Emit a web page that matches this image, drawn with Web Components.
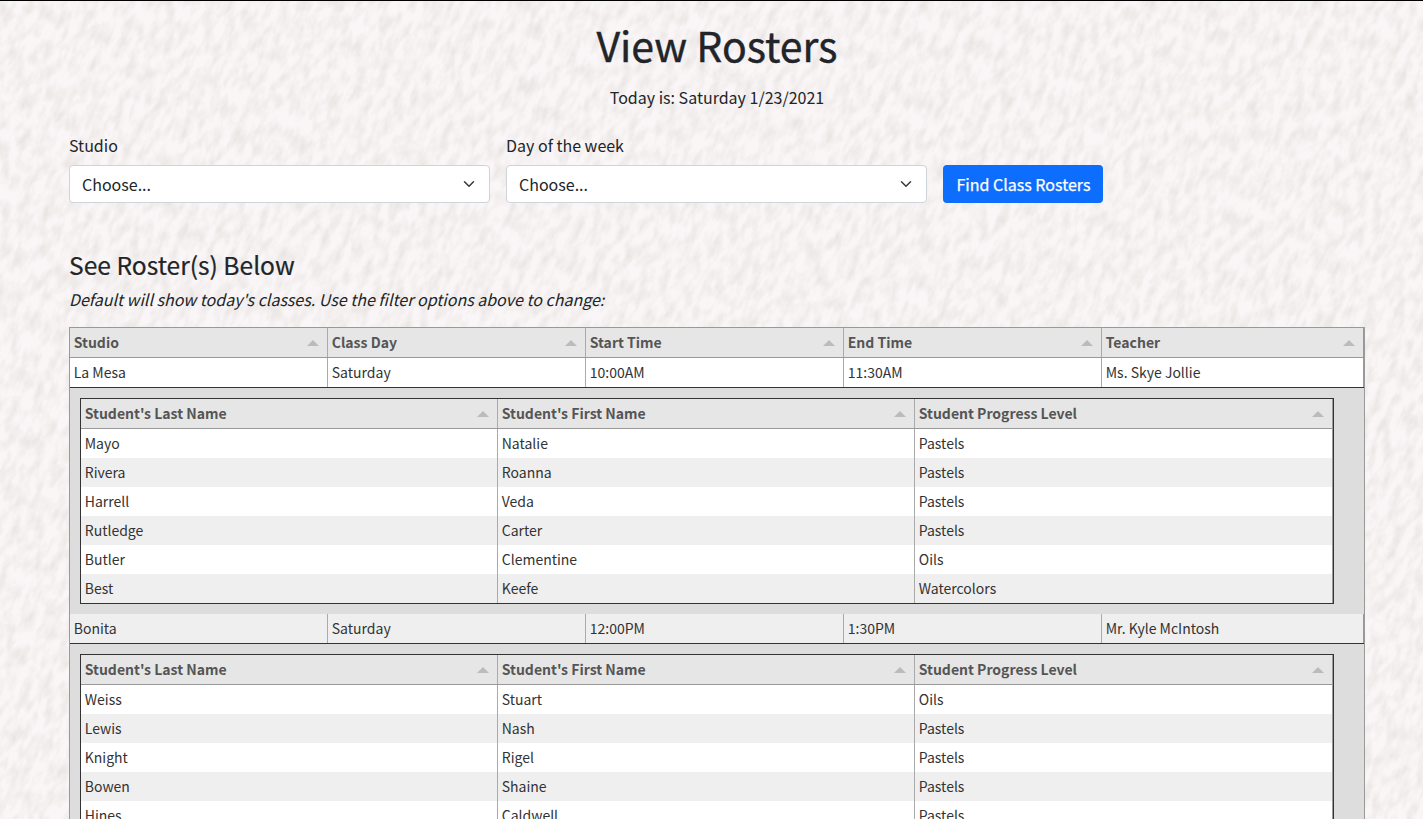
<!DOCTYPE html>
<html lang="en">
<head>
<meta charset="utf-8">
<title>View Rosters</title>
<style>
html,body{margin:0;height:100%;overflow:hidden}
body{font:400 16px/24px "Noto Sans CJK JP","Noto Sans",sans-serif;color:#212529;background:#f8f5f5}
</style>
</head>
<body>
<roster-page></roster-page>
<script>
const define = (name, html, setup) => customElements.define(name, class extends HTMLElement {
  connectedCallback() {
    if (this.shadowRoot) return;
    const root = this.attachShadow({ mode: 'open' });
    root.innerHTML = html;
    if (setup) setup(this, root);
  }
});

define('paper-texture', `
<style>:host{position:absolute;inset:0;overflow:hidden;z-index:-1;background:#faf6f7}svg{display:block}</style>
<svg width="1423" height="819" aria-hidden="true">
  <filter id="grain" filterUnits="userSpaceOnUse" x="-400" y="-700" width="2300" height="2300" color-interpolation-filters="sRGB">
    <feTurbulence type="fractalNoise" baseFrequency="0.12 0.055" numOctaves="5" seed="8" result="n"/>
    <feColorMatrix in="n" values="0 0 0 0 .74  0 0 0 0 .73  0 0 0 0 .69  .55 0 0 0 -.2"/>
  </filter>
  <g transform="rotate(24)"><rect x="-400" y="-700" width="2300" height="2300" filter="url(#grain)"/></g>
</svg>`);

define('select-field', `
<style>
:host{display:block;width:421px}
label{display:block;height:24px;margin-bottom:8px}
.box{box-sizing:border-box;height:38px;border:1px solid #ced4da;border-radius:4px;background:#fff;padding:0 12px;display:flex;align-items:center;justify-content:space-between}
svg{width:16px;height:12px}
</style>
<label><slot></slot></label>
<div class="box"><span>Choose...</span><svg viewBox="0 0 16 16"><path fill="none" stroke="#343a40" stroke-linecap="round" stroke-linejoin="round" stroke-width="2" d="M2 5l6 6 6-6"/></svg></div>`);

define('primary-button', `
<style>:host{display:block}
button{box-sizing:border-box;width:160px;height:38px;border:0;border-radius:4px;background:#0d6efd;color:#fff;font:inherit;-webkit-text-stroke:.25px #fff;padding:0 0 0 1px;white-space:nowrap}</style>
<button><slot></slot></button>`);

define('table-cell', `
<style>
:host{box-sizing:border-box;display:flex;justify-content:space-between;align-items:center;padding:0 8px 0 3.75px;height:29px;border-right:1px solid #aaa;font-size:14px;line-height:29px;color:#333;white-space:nowrap}
:host([head]){font-weight:700;color:#555}
:host(:last-of-type){border-color:#999}
i{display:none;border:6px solid transparent;border-top:0;border-bottom-color:#bbb}
:host([head]) i{display:block}
</style>
<span><slot></slot></span><i></i>`);

const cells = (list, head) => list.map(t => `<table-cell${head ? ' head' : ''}>${t}</table-cell>`).join('');

define('student-table', `
<style>
:host{box-sizing:border-box;display:block;width:1254px;border:1px solid #333;background:#fff}
.row{display:grid;grid-template-columns:417px 417px 418px}
.row:nth-child(odd){background:#efefef}
.row.head{background:#e6e6e6;border-bottom:1px solid #999}
</style>`, (el, root) => {
  const rows = el.getAttribute('rows').split(';').map(r => r.split(','));
  root.innerHTML += '<div><div class="row head">' + cells(["Student's Last Name", "Student's First Name", 'Student Progress Level'], true) + '</div>' +
    rows.map(r => `<div class="row">${cells(r)}</div>`).join('') + '</div>';
});

define('class-entry', `
<style>
:host{display:block;background:#ddd}
.row{display:grid;grid-template-columns:repeat(4,258px) 262px;background:#fff;border-bottom:1px solid #333}
:host([alt]) .row{background:#efefef}
.students{padding:10px}
</style>
<div class="row"></div><div class="students"><slot></slot></div>`, (el, root) => {
  root.querySelector('.row').innerHTML = cells(el.getAttribute('info').split(','));
});

define('class-table', `
<style>
:host{box-sizing:border-box;display:block;width:1296px;border:1px solid #999}
.head{display:grid;grid-template-columns:repeat(4,258px) 262px;background:#e6e6e6;border-bottom:1px solid #999}
</style>
<div class="head">${cells(['Studio', 'Class Day', 'Start Time', 'End Time', 'Teacher'], true)}</div><slot></slot>`);

define('roster-page', `
<style>
:host{box-sizing:border-box;position:relative;z-index:0;display:block;height:819px;overflow:hidden;border-top:1px solid #000;padding:19px 58px 0 69px}
h1{margin:0 0 17px;font-size:41px;line-height:48px;font-weight:400;text-align:center;-webkit-text-stroke:.4px #212529}
.today{margin:0 0 24px;text-align:center}
form{display:flex;gap:16px;align-items:flex-end;margin:0 0 47px}
h2{margin:0 0 8px;font-size:24.6px;line-height:29px;font-weight:400;-webkit-text-stroke:.2px #212529}
em{display:block;margin-bottom:16px}
</style>
<paper-texture></paper-texture>
<h1>View Rosters</h1>
<p class="today">Today is: Saturday 1/23/2021</p>
<form><select-field>Studio</select-field><select-field>Day of the week</select-field><primary-button>Find Class Rosters</primary-button></form>
<h2>See Roster(s) Below</h2>
<em>Default will show today's classes. Use the filter options above to change:</em>
<class-table>
  <class-entry info="La Mesa,Saturday,10:00AM,11:30AM,Ms. Skye Jollie"><student-table rows="Mayo,Natalie,Pastels;Rivera,Roanna,Pastels;Harrell,Veda,Pastels;Rutledge,Carter,Pastels;Butler,Clementine,Oils;Best,Keefe,Watercolors"></student-table></class-entry>
  <class-entry alt info="Bonita,Saturday,12:00PM,1:30PM,Mr. Kyle McIntosh"><student-table rows="Weiss,Stuart,Oils;Lewis,Nash,Pastels;Knight,Rigel,Pastels;Bowen,Shaine,Pastels;Hines,Caldwell,Pastels"></student-table></class-entry>
</class-table>`);
</script>
</body>
</html>
